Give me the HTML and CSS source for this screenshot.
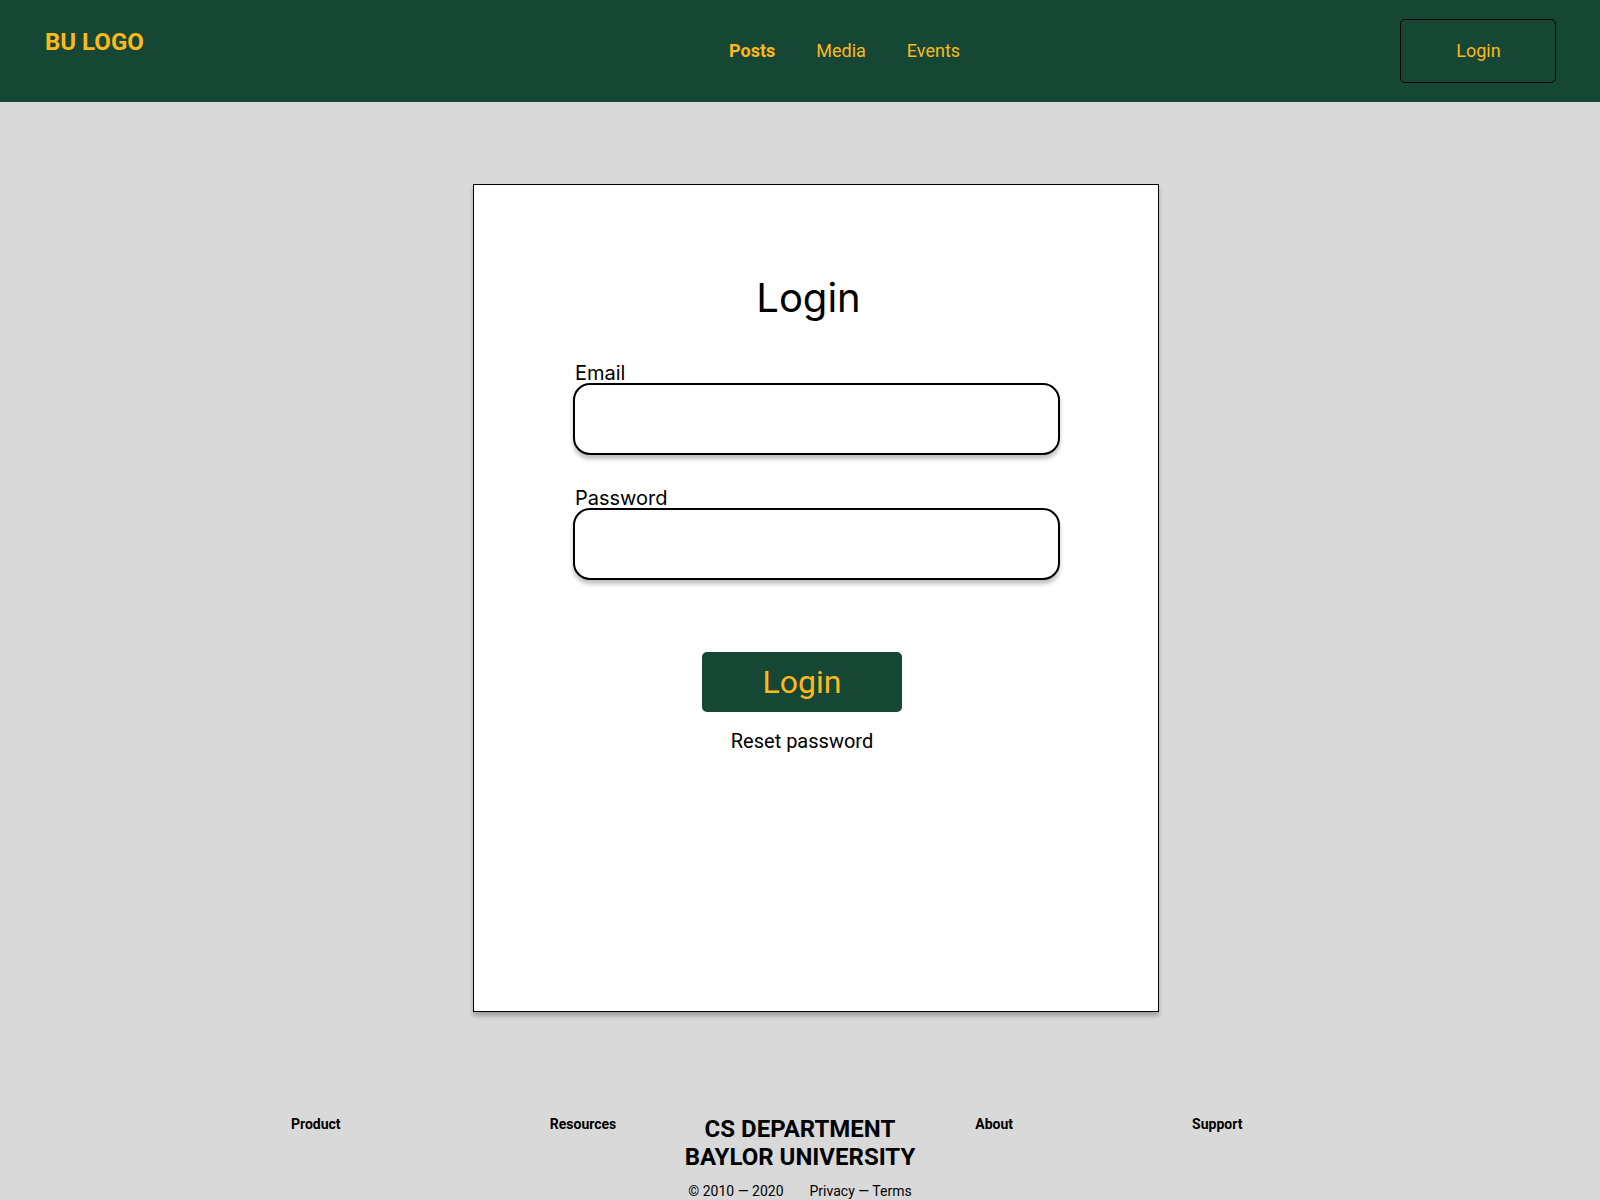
FILE: index.html
```html
<!DOCTYPE html>
<html lang="en">
<head>
<meta charset="utf-8">
<meta name="viewport" content="width=device-width, initial-scale=1">
<title>Login</title>
<link rel="stylesheet" href="styles.css">
</head>
<body>
<header class="site-header">
  <a class="logo" href="#">BU LOGO</a>
  <nav class="site-nav">
    <a class="nav-link nav-link-active" href="#">Posts</a>
    <a class="nav-link" href="#">Media</a>
    <a class="nav-link" href="#">Events</a>
  </nav>
  <button class="header-login" type="button">Login</button>
</header>

<main class="main">
  <form class="card">
    <h1 class="card-title">Login</h1>
    <div class="field">
      <label class="field-label" for="email">Email</label>
      <input class="field-input" id="email" type="email">
    </div>
    <div class="field">
      <label class="field-label" for="password">Password</label>
      <input class="field-input" id="password" type="password">
    </div>
    <div class="actions">
      <button class="submit" type="submit">Login</button>
      <a class="reset" href="#">Reset password</a>
    </div>
  </form>
</main>

<footer class="site-footer">
  <a class="footer-link" href="#">Product</a>
  <a class="footer-link" href="#">Resources</a>
  <div class="footer-brand">
    <p class="department">CS DEPARTMENT<br>BAYLOR UNIVERSITY</p>
    <div class="legal">
      <span>© 2010 — 2020</span>
      <a class="legal-link" href="#">Privacy — Terms</a>
    </div>
  </div>
  <a class="footer-link" href="#">About</a>
  <a class="footer-link" href="#">Support</a>
</footer>
</body>
</html>
```
FILE: styles.css
```css
:root {
  --green: #154734;
  --gold: #ffb81c;
  --shadow: 0 4px 4px rgba(0, 0, 0, 0.25);
}

* {
  box-sizing: border-box;
}

body {
  margin: 0;
  background: #d9d9d9;
  color: #000;
  font-family: Roboto, sans-serif;
}

a {
  color: inherit;
  text-decoration: none;
}

.site-header {
  display: grid;
  grid-template-columns: 684fr auto 595fr;
  align-items: center;
  padding: 19px 44px;
  background: var(--green);
  color: var(--gold);
}

.logo {
  justify-self: start;
  align-self: start;
  padding: 9px 0 0 1px;
  font-size: 24px;
  line-height: 28px;
  font-weight: 700;
}

.site-nav {
  display: flex;
  gap: 41px;
}

.nav-link {
  font-size: 18px;
  line-height: 24px;
}

.nav-link-active {
  font-weight: 700;
}

.header-login {
  justify-self: end;
  width: 156px;
  height: 64px;
  padding: 0 0 2px 1px;
  border: 1px solid #000;
  border-radius: 5px;
  background: transparent;
  color: inherit;
  font: inherit;
  font-size: 18px;
}

.main {
  display: flex;
  justify-content: center;
  padding: 82px 0 100px 32px;
}

.card {
  width: 100%;
  max-width: 686px;
  padding: 89px 98px 258px 99px;
  border: 1px solid #000;
  background: #fff;
  box-shadow: var(--shadow);
}

.card-title {
  margin: 0 0 41px;
  padding-right: 16px;
  font-family: Inter, sans-serif;
  font-size: 40px;
  line-height: 48px;
  font-weight: 400;
  text-align: center;
}

.field {
  display: flex;
  flex-direction: column;
}

.field + .field {
  margin-top: 33px;
}

.field-label {
  padding-left: 2px;
  font-family: Inter, sans-serif;
  font-size: 20px;
  line-height: 20px;
}

.field-input {
  width: 100%;
  height: 72px;
  padding: 0 20px;
  border: 2px solid #000;
  border-radius: 17px;
  background: #fff;
  box-shadow: var(--shadow);
  font-family: Inter, sans-serif;
  font-size: 20px;
}

.actions {
  display: flex;
  flex-direction: column;
  align-items: center;
  gap: 17px;
  margin-top: 72px;
  padding-right: 29px;
}

.submit {
  width: 200px;
  height: 60px;
  border: 0;
  border-radius: 5px;
  background: var(--green);
  color: var(--gold);
  font: inherit;
  font-size: 32px;
}

.reset {
  font-size: 20px;
  line-height: 24px;
}

.site-footer {
  display: grid;
  grid-template-columns: 259fr 135fr auto 217fr 118fr;
  padding: 0 290px 0 291px;
}

.footer-link {
  padding-top: 4px;
  font-size: 14px;
  line-height: 16px;
  font-weight: 700;
}

.footer-brand {
  display: flex;
  flex-direction: column;
  align-items: center;
  gap: 12px;
  margin-right: 60px;
  padding-top: 3px;
}

.department {
  margin: 0;
  font-size: 24px;
  line-height: 28px;
  font-weight: 700;
  text-align: center;
}

.legal {
  display: flex;
  gap: 26px;
  font-size: 14px;
  line-height: 16px;
}
```
